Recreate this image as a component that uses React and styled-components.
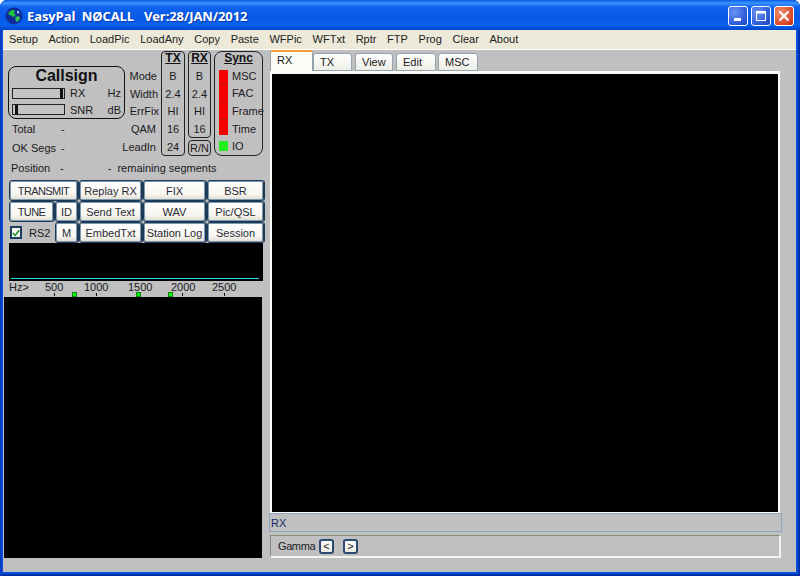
import React from "react";
import styled, { createGlobalStyle } from "styled-components";

const Global = createGlobalStyle`
  html, body { margin: 0; padding: 0; background: #fff; }
  * { box-sizing: border-box; }
`;

const Win = styled.div`
  width: 800px; height: 576px; overflow: hidden;
  display: flex; flex-direction: column;
  border-radius: 7px 7px 0 0;
  background: #0a50dc;
  padding: 0 4px 4px 3px;
  box-shadow: inset 2px 0 0 #0a3fc4, inset -2px 0 0 #0030b0, inset 0 -2px 0 #0030a8;
  font-family: "Liberation Sans", Arial, sans-serif;
  font-size: 11px; color: #1a1a22;
`;
const TitleBar = styled.div`
  height: 30px; margin: 0 -4px 0 -3px; padding: 1px 6px 0 5px;
  display: flex; align-items: center; gap: 4px;
  border-radius: 7px 7px 0 0;
  background: linear-gradient(180deg, #0a5ae6 0, #3a94ff 3px, #0f64ee 7px, #0758e6 18px, #0a62f0 25px, #0044cc 30px);
`;
const TitleText = styled.div`
  flex: 1; color: #fff; font-size: 13px; font-weight: 700; letter-spacing: -0.1px;
  font-family: "Open Sans", "Liberation Sans", sans-serif;
  white-space: pre; text-shadow: 1px 1px 0 #0a3aa8;
`;
const WinBtns = styled.div`display: flex; gap: 3px;`;
const WinBtn = styled.div`
  width: 20px; height: 20px; border: 1px solid #fff; border-radius: 3px;
  display: flex; align-items: center; justify-content: center;
  background: ${p => p.$close
    ? "radial-gradient(circle at 30% 30%, #f0906a, #d8482a 70%, #b03010)"
    : "radial-gradient(circle at 30% 30%, #6a94f4, #2a58d8 70%, #1c44b8)"};
`;
const Menu = styled.div`
  height: 20px; background: #ece9d8; border-bottom: 1px solid #fff;
  display: flex; align-items: center; padding: 0 0 2px 6px; gap: 10.7px;
`;
const MenuItem = styled.div`color: #222;`;
const Main = styled.div`
  flex: 1; min-height: 0; background: #c0c0c0;
  display: grid; grid-template-columns: 266px 1fr;
`;

const Left = styled.div`display: flex; flex-direction: column; padding-left: 1px;`;
const Status = styled.div`display: flex; padding: 1px 0 0 4px; height: 106px;`;
const CallCol = styled.div`width: 118px; padding-top: 15px; display: flex; flex-direction: column;`;
const CallBox = styled.div`
  width: 117px; height: 53px; border: 1px solid #111; border-radius: 8px;
  padding: 0 3px; display: flex; flex-direction: column;
`;
const CallTitle = styled.div`
  font-weight: 700; font-size: 16px;
  text-align: center; height: 18px; line-height: 18px; color: #111;
`;
const MeterRow = styled.div`display: flex; align-items: center; height: 17px; gap: 5px;`;
const Meter = styled.div`
  width: 53px; height: 11px; border: 1px solid #222; display: flex;
  justify-content: ${p => p.$end ? "flex-end" : "flex-start"};
  padding: 0 ${p => p.$end ? 1 : 2}px; background: #c4c4c4;
`;
const Thumb = styled.div`width: 3px; background: #111;`;
const Spacer = styled.div`flex: 1;`;
const InfoRow = styled.div`display: flex; height: ${p => p.$h || 20}px; align-items: center; padding-left: 4px; margin-top: ${p => p.$mt || 0}px;`;
const InfoLabel = styled.div`width: 49px;`;
const Labels = styled.div`
  width: 39px; margin-left: -4px; padding-top: 16px; text-align: right;
  display: grid; grid-auto-rows: 17.7px; align-items: center; height: 105px;
`;
const LabelCell = styled.div`padding-right: ${p => p.$pr}px; white-space: nowrap;`;
const ValBox = styled.div`
  width: ${p => p.$w}px; height: ${p => p.$h}px; border: 1px solid #222; border-radius: 4px;
  display: grid; grid-template-rows: ${p => p.$plain ? "1fr" : "15px"}; grid-auto-rows: 17.7px;
  justify-items: center; align-items: center;
`;
const BoxHead = styled.div`
  font-weight: 700; text-decoration: underline; font-size: 12px;
  height: 15px; line-height: 13px; text-align: center; color: #111;
`;
const RxCol = styled.div`display: flex; flex-direction: column; gap: 2px; margin-left: 3px;`;
const SyncBox = styled.div`
  width: 49px; height: 105px; margin-left: 3px; border: 1px solid #222; border-radius: 8px;
  display: flex; flex-direction: column;
`;
const SyncRow = styled.div`display: flex; align-items: center; height: 17.7px; gap: 4px; padding-left: 4px; white-space: nowrap;`;
const Led = styled.div`
  flex: none; width: 9px; background: ${p => p.$on ? "#22f01e" : "#f40000"};
  height: ${p => p.$on ? "10px" : p.$trim ? "14.7px" : "17.7px"};
  align-self: ${p => p.$on ? "center" : p.$trim === "top" ? "flex-end" : "flex-start"};
  ${p => p.$on || p.$trim === "bottom" ? "" : "border-bottom: 1px solid #c81010;"}
`;
const PositionRow = styled.div`display: flex; height: 18px; padding-left: 7px; align-items: center; margin-top: 3px;`;
const Remaining = styled.span`margin-left: 44px; white-space: pre;`;

const ButtonGrid = styled.div`
  margin: 3px 0 0 5px; width: 254px;
  display: grid; gap: 0 1px;
  grid-template-columns: 45px 23px 63px 63px 57px;
  grid-auto-rows: 21px;
`;
const Btn = styled.div`
  grid-column: span ${p => p.$span || 1};
  border: 1px solid #1c3a58; border-radius: 3px;
  box-shadow: inset 0 0 0 1px #7f98ae, 1px 0 0 #1c3a58;
  background: linear-gradient(180deg, #ffffff, #f6f5ef 70%, #dedbcf);
  display: flex; align-items: center; justify-content: center;
  white-space: nowrap; color: #2a2a34; font-size: 11px;
  letter-spacing: ${p => p.$tight ? "-0.6px" : "0"};
`;
const CheckCell = styled.div`display: flex; align-items: center; gap: 7px; padding-left: 1px;`;
const Check = styled.div`
  width: 12px; height: 13px; border: 2px solid #1c3e5e; background: #f8f8f2;
  display: flex; align-items: center; justify-content: center;
`;
const Scope = styled.div`
  margin: 0 0 0 5px; width: 254px; height: 38px; background: #000;
  display: flex; align-items: flex-end; padding: 0 4px 2px 2px;
`;
const ScopeLine = styled.div`height: 1px; flex: 1; background: #18e0f0;`;
const Ruler = styled.div`position: relative; height: 16px; font-size: 11px;`;
const RulerLabel = styled.div`position: absolute; top: -1px; left: ${p => p.$x}px; line-height: 14px;`;
const Tick = styled.div`position: absolute; bottom: 1px; left: ${p => p.$x}px; width: 1px; height: 3px; background: #111;`;
const Marker = styled.div`position: absolute; bottom: 0; left: ${p => p.$x}px; width: 5px; height: 5px; background: #14f014; border: 1px solid #0a8a0a;`;
const Waterfall = styled.div`width: 258px; height: 261px; background: #000;`;

const Right = styled.div`display: flex; flex-direction: column;`;
const Tabs = styled.div`display: flex; height: 21px; align-items: flex-end; margin-left: 1px;`;
const Tab = styled.div`
  width: ${p => p.$w}px; margin-right: ${p => p.$mr || 0}px;
  height: ${p => p.$active ? 21 : 18}px; padding-left: 6px;
  display: flex; align-items: center; border-radius: 3px 3px 0 0;
  background: ${p => p.$active ? "#fbfbf8" : "linear-gradient(180deg,#ffffff,#eeeee6)"};
  border: 1px solid #93a4ae; border-bottom: ${p => p.$active ? "none" : "1px solid #93a4ae"};
  ${p => p.$active ? "border-top: 2px solid #f0a030; padding-bottom: 3px;" : ""}
  color: #1a1a22;
`;
const Viewer = styled.div`
  width: 510px; height: 442px; margin-left: 1px; background: #fbfbf8;
  padding: 3px 2px 1px;
`;
const Black = styled.div`height: 100%; background: #000;`;
const StatusBar = styled.div`
  width: 513px; height: 19px; border: 1px solid #8fa6c0; padding: 0 1px;
  display: flex; align-items: center; color: #1a2a6a; background: #c0c0c0;
`;
const GammaBox = styled.div`
  width: 511px; height: 23px; margin: 3px 0 0 1px;
  border: 1px solid #8c8a78; border-right: 2px solid #f4f4ec; border-bottom: 2px solid #f4f4ec;
  display: flex; align-items: center; padding-left: 7px;
`;
const GammaLabel = styled.span`width: 41px; letter-spacing: -0.4px;`;
const MiniBtn = styled.div`
  width: 15px; height: 15px; border: 2px solid #2a4a70; border-radius: 3px;
  background: linear-gradient(180deg,#fff,#ecebe2);
  display: flex; align-items: center; justify-content: center;
  font-size: 11px; margin-right: ${p => p.$mr || 0}px; line-height: 1;
`;

const Globe = () => (
  <svg width="18" height="18" viewBox="0 0 16 16">
    <circle cx="8" cy="8" r="7.5" fill="#102a9a" />
    <path d="M3 5 L6 2.5 L9 3 L8 5 L9.5 7 L7.5 9 L5.5 7.5 L3.5 7 Z" fill="#20c040" />
    <path d="M9 9 L12 8 L13.5 10 L11 13.5 L9.5 12 Z" fill="#30c850" />
    <path d="M11 3 L13 4.5 L12 6 L10.5 5 Z" fill="#9ad8f8" />
  </svg>
);

const menu = ["Setup","Action","LoadPic","LoadAny","Copy","Paste","WFPic","WFTxt","Rptr","FTP","Prog","Clear","About"];
const labels = [["Mode",4],["Width",3],["ErrFix",2],["QAM",5],["LeadIn",5]];
const txVals = ["B","2.4","HI","16","24"];
const rxVals = ["B","2.4","HI","16"];
const sync = [["MSC","top"],["FAC",null],["Frame",null],["Time","bottom"]];

export default function App() {
  return (
    <>
      <Global />
      <Win>
        <TitleBar>
          <Globe />
          <TitleText>{"EasyPal  NØCALL   Ver:28/JAN/2012"}</TitleText>
          <WinBtns>
            <WinBtn>
              <svg width="14" height="14" viewBox="0 0 14 14"><rect x="3" y="9" width="7" height="3" fill="#fff" /></svg>
            </WinBtn>
            <WinBtn>
              <svg width="14" height="14" viewBox="0 0 14 14"><rect x="2.5" y="2.5" width="9" height="9" fill="none" stroke="#fff" /><rect x="2" y="2" width="10" height="2.5" fill="#fff" /></svg>
            </WinBtn>
            <WinBtn $close>
              <svg width="14" height="14" viewBox="0 0 14 14"><path d="M2.5 2.5 L11.5 11.5 M11.5 2.5 L2.5 11.5" stroke="#fff" strokeWidth="2.2" /></svg>
            </WinBtn>
          </WinBtns>
        </TitleBar>
        <Menu>
          {menu.map(m => <MenuItem key={m}>{m}</MenuItem>)}
        </Menu>
        <Main>
          <Left>
            <Status>
              <CallCol>
                <CallBox>
                  <CallTitle>Callsign</CallTitle>
                  <MeterRow>
                    <Meter $end><Thumb /></Meter>
                    <span>RX</span><Spacer /><span>Hz</span>
                  </MeterRow>
                  <MeterRow>
                    <Meter><Thumb /></Meter>
                    <span>SNR</span><Spacer /><span>dB</span>
                  </MeterRow>
                </CallBox>
                <InfoRow $mt={2} $h={19}><InfoLabel>Total</InfoLabel>-</InfoRow>
                <InfoRow $mt={2} $h={20}><InfoLabel>OK Segs</InfoLabel>-</InfoRow>
              </CallCol>
              <Labels>{labels.map(([l, pr]) => <LabelCell key={l} $pr={pr}>{l}</LabelCell>)}</Labels>
              <ValBox $w={24} $h={105}>
                <BoxHead>TX</BoxHead>
                {txVals.map((v, i) => <div key={i}>{v}</div>)}
              </ValBox>
              <RxCol>
                <ValBox $w={23} $h={87}>
                  <BoxHead>RX</BoxHead>
                  {rxVals.map((v, i) => <div key={i}>{v}</div>)}
                </ValBox>
                <ValBox $w={23} $h={16} $plain>R/N</ValBox>
              </RxCol>
              <SyncBox>
                <BoxHead>Sync</BoxHead>
                {sync.map(([s, t]) => <SyncRow key={s}><Led $trim={t} />{s}</SyncRow>)}
                <SyncRow><Led $on />IO</SyncRow>
              </SyncBox>
            </Status>
            <PositionRow>
              <InfoLabel>Position</InfoLabel>-
              <Remaining>{"-  remaining segments"}</Remaining>
            </PositionRow>
            <ButtonGrid>
              <Btn $span={2} $tight>TRANSMIT</Btn>
              <Btn>Replay RX</Btn><Btn>FIX</Btn><Btn>BSR</Btn>
              <Btn $tight>TUNE</Btn><Btn>ID</Btn>
              <Btn>Send Text</Btn><Btn>WAV</Btn><Btn>Pic/QSL</Btn>
              <CheckCell>
                <Check>
                  <svg width="10" height="10" viewBox="0 0 10 10"><path d="M1 5 L4 8 L9 1.5" fill="none" stroke="#1c8a2c" strokeWidth="2" /></svg>
                </Check>
                RS2
              </CheckCell>
              <Btn>M</Btn><Btn>EmbedTxt</Btn><Btn>Station Log</Btn><Btn>Session</Btn>
            </ButtonGrid>
            <Scope><ScopeLine /></Scope>
            <Ruler>
              <RulerLabel $x={5}>Hz&gt;</RulerLabel>
              <RulerLabel $x={41}>500</RulerLabel>
              <RulerLabel $x={80}>1000</RulerLabel>
              <RulerLabel $x={124}>1500</RulerLabel>
              <RulerLabel $x={167}>2000</RulerLabel>
              <RulerLabel $x={208}>2500</RulerLabel>
              <Tick $x={50} /><Tick $x={92} /><Tick $x={136} /><Tick $x={178} /><Tick $x={220} />
              <Marker $x={68} /><Marker $x={132} /><Marker $x={164} />
            </Ruler>
            <Waterfall />
          </Left>
          <Right>
            <Tabs>
              <Tab $active $w={43}>RX</Tab>
              <Tab $w={39} $mr={3}>TX</Tab>
              <Tab $w={38} $mr={3}>View</Tab>
              <Tab $w={40} $mr={2}>Edit</Tab>
              <Tab $w={40}>MSC</Tab>
            </Tabs>
            <Viewer><Black /></Viewer>
            <StatusBar>RX</StatusBar>
            <GammaBox>
              <GammaLabel>Gamma</GammaLabel>
              <MiniBtn $mr={9}>&lt;</MiniBtn>
              <MiniBtn>&gt;</MiniBtn>
            </GammaBox>
          </Right>
        </Main>
      </Win>
    </>
  );
}
